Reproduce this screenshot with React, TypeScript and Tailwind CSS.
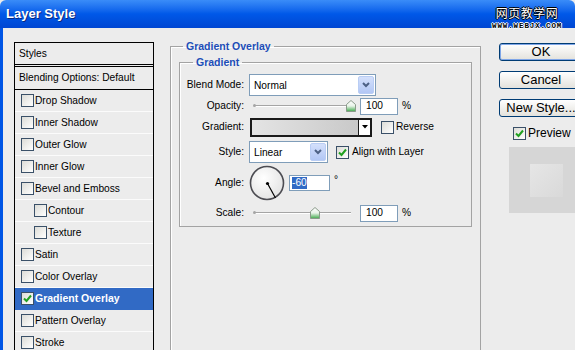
import React from "react";

const styleRows = [
  { label: "Drop Shadow" },
  { label: "Inner Shadow" },
  { label: "Outer Glow" },
  { label: "Inner Glow" },
  { label: "Bevel and Emboss" },
  { label: "Contour", indent: true },
  { label: "Texture", indent: true },
  { label: "Satin" },
  { label: "Color Overlay" },
  { label: "Gradient Overlay", checked: true, selected: true },
  { label: "Pattern Overlay" },
  { label: "Stroke" },
];

const Check = ({ checked = false }: { checked?: boolean }) => (
  <span className="w-[13px] h-[13px] shrink-0 border border-[#3a5068] bg-gradient-to-br from-[#dcdcd7] to-white flex items-center justify-center">
    {checked && (
      <svg width="9" height="9" viewBox="0 0 9 9">
        <path d="M1 4.5 L3.5 7 L8 1.5" fill="none" stroke="#21a121" strokeWidth="2" />
      </svg>
    )}
  </span>
);

const Combo = ({ value, width }: { value: string; width: string }) => (
  <div className={`${width} h-[22px] border border-[#7f9db9] bg-white flex items-center`}>
    <span className="flex-1 pl-[4px] pt-[1px]">{value}</span>
    <span className="w-[16px] h-[18px] mr-[1px] rounded-[2px] border border-[#b9cdf4] bg-gradient-to-b from-[#d4e0fb] to-[#b2c7f5] flex items-center justify-center">
      <svg width="8" height="6" viewBox="0 0 8 6">
        <path d="M1 1 L4 4 L7 1" fill="none" stroke="#4d6185" strokeWidth="2" />
      </svg>
    </span>
  </div>
);

const Thumb = () => (
  <svg width="10" height="12" viewBox="0 0 10 12">
    <defs>
      <linearGradient id="tg" x1="0" y1="0" x2="0" y2="1">
        <stop offset="0" stopColor="#ffffff" />
        <stop offset="0.5" stopColor="#e8f3e8" />
        <stop offset="1" stopColor="#3fa94a" />
      </linearGradient>
    </defs>
    <path d="M0.5 11.5 L0.5 4.5 L5 0.5 L9.5 4.5 L9.5 11.5 Z" fill="url(#tg)" stroke="#8a9a8a" />
  </svg>
);

const Slider = ({ pos }: { pos: number }) => (
  <div className="relative w-[107px] h-[14px]">
    <div className="absolute left-[5px] top-[6px] w-[97px] h-[1px] bg-[#a5a5a5] shadow-[0_1px_0_#fff]" />
    <div className="absolute left-[4px] top-[5px] w-[3px] h-[3px] rounded-full bg-[#a5a5a5]" />
    <div className="absolute top-[1px]" style={{ left: pos - 5 }}>
      <Thumb />
    </div>
  </div>
);

const NumBox = ({ value }: { value: string }) => (
  <div className="w-[38px] h-[17px] border border-[#7f9db9] bg-white pl-[5px] flex items-center">{value}</div>
);

const Button = ({ label, primary = false }: { label: string; primary?: boolean }) => (
  <div
    className={`h-[18px] rounded-[3px] border border-[#003c74] bg-gradient-to-b from-white to-[#e3e2dc] flex items-center justify-center text-[13px] ${
      primary ? "shadow-[inset_0_0_0_1px_#7fa6e8]" : ""
    }`}
  >
    {label}
  </div>
);

export default function App() {
  return (
    <div className="relative w-[575px] h-[350px] overflow-hidden bg-[#ececec] text-black font-['Liberation_Sans',Arial,sans-serif] text-[10.2px] flex flex-col">
      {/* title bar */}
      <div className="h-[28px] shrink-0 rounded-t-[6px] bg-gradient-to-b from-[#3a8cf8] via-[#0058e8] to-[#0046d2] flex items-center pl-[6px]">
        <span className="text-white font-bold text-[13px] [text-shadow:1px_1px_0_#0a2a80]">Layer Style</span>
      </div>

      {/* watermark */}
      <div className="absolute left-[492px] top-[7px] flex flex-col items-center leading-none">
        <span className="text-white text-[12px] font-['Noto_Sans_CJK_SC',sans-serif] tracking-[0.5px] [text-shadow:1px_0_0_#000,-1px_0_0_#000,0_1px_0_#000,0_-1px_0_#000]">
          网页教学网
        </span>
        <span className="mt-[4px] text-black text-[7.5px] font-bold font-['Liberation_Mono',monospace] tracking-[0.9px] [text-shadow:1px_0_0_#fff,-1px_0_0_#fff,0_1px_0_#fff,0_-1px_0_#fff]">
          WWW.WEBJX.COM
        </span>
      </div>

      <div className="flex-1 flex border-l-[3px] border-[#0055e5] min-h-0">
        {/* styles list */}
        <div className="ml-[11px] mt-[14px] w-[140px] h-[320px] shrink-0 border border-black">
          <div className="h-[22px] border-b border-black pl-[4px] flex items-center">Styles</div>
          <div className="h-[24px] mt-[1px] border-y border-black pl-[4px] flex items-center">
            Blending Options: Default
          </div>
          {styleRows.map((row) => (
            <div
              key={row.label}
              className={`h-[22px] flex items-center border-b ${
                row.selected ? "bg-[#316ac5] text-white font-bold text-[10.5px] border-[#316ac5]" : "border-[#fbfbfb]"
              } ${row.indent ? "pl-[19px]" : "pl-[6px]"}`}
            >
              <Check checked={row.checked} />
              <span className="ml-[1px]">{row.label}</span>
            </div>
          ))}
        </div>

        {/* main panel */}
        <fieldset className="ml-[16px] mt-[12px] w-[311px] h-[330px] shrink-0 border border-[#a3a3a3] shadow-[inset_1px_1px_0_#fff]">
          <legend className="ml-[12px] px-[3px] leading-[13px] font-bold text-[10.5px] text-[#1c4eb8]">Gradient Overlay</legend>
          <fieldset className="mx-[8px] mt-[3px] border border-[#a3a3a3] shadow-[inset_1px_1px_0_#fff] pb-[3px]">
            <legend className="ml-[13px] px-[3px] leading-[13px] font-bold text-[10.5px] text-[#1c4eb8]">Gradient</legend>

            <div className="mt-[5px] h-[22px] flex items-center">
              <span className="w-[64px] text-right">Blend Mode:</span>
              <div className="ml-[5px]">
                <Combo value="Normal" width="w-[127px]" />
              </div>
            </div>

            <div className="h-[20px] flex items-center">
              <span className="w-[64px] text-right">Opacity:</span>
              <div className="ml-[5px] flex items-center">
                <Slider pos={102} />
                <div className="ml-[4px]">
                  <NumBox value="100" />
                </div>
                <span className="ml-[4px]">%</span>
              </div>
            </div>

            <div className="mt-[1px] h-[20px] flex items-center">
              <span className="w-[64px] text-right">Gradient:</span>
              <div className="ml-[6px] w-[122px] h-[19px] border-2 border-[#1a1a1a] flex">
                <div className="flex-1 bg-gradient-to-r from-[#e4e4e4] to-[#c9c9c9]" />
                <div className="w-[12px] bg-white border-l border-[#1a1a1a] flex items-center justify-center">
                  <svg width="6" height="4" viewBox="0 0 6 4">
                    <path d="M0 0 L6 0 L3 3.5 Z" fill="#000" />
                  </svg>
                </div>
              </div>
              <div className="ml-[9px]">
                <Check />
              </div>
              <span className="ml-[2px]">Reverse</span>
            </div>

            <div className="mt-[4px] h-[22px] flex items-center">
              <span className="w-[64px] text-right">Style:</span>
              <div className="ml-[5px]">
                <Combo value="Linear" width="w-[79px]" />
              </div>
              <div className="ml-[8px]">
                <Check checked />
              </div>
              <span className="ml-[3px]">Align with Layer</span>
            </div>

            <div className="mt-[2px] h-[36px] flex items-center">
              <span className="w-[64px] text-right">Angle:</span>
              <svg className="ml-[5px]" width="36" height="36" viewBox="0 0 36 36">
                <defs>
                  <radialGradient id="dial" cx="0.4" cy="0.35" r="0.7">
                    <stop offset="0" stopColor="#ffffff" />
                    <stop offset="1" stopColor="#e2e2e2" />
                  </radialGradient>
                </defs>
                <circle cx="18" cy="18" r="16.5" fill="url(#dial)" stroke="#4c4c52" strokeWidth="1.6" />
                <line x1="18.5" y1="18.5" x2="26.5" y2="33" stroke="#000" strokeWidth="1.2" />
                <circle cx="18.5" cy="18.5" r="1.6" fill="#000" />
              </svg>
              <div className="ml-[4px] w-[41px] h-[16px] border border-[#7f9db9] bg-white flex items-center pl-[2px]">
                <span className="bg-[#316ac5] text-white leading-[12px]">-60</span>
              </div>
              <span className="ml-[4px] self-start mt-[10px] leading-none">°</span>
            </div>

            <div className="mt-[2px] h-[20px] flex items-center">
              <span className="w-[64px] text-right">Scale:</span>
              <div className="ml-[5px] flex items-center">
                <Slider pos={66} />
                <div className="ml-[4px]">
                  <NumBox value="100" />
                </div>
                <span className="ml-[4px]">%</span>
              </div>
            </div>
          </fieldset>
        </fieldset>

        {/* buttons */}
        <div className="ml-[18px] mt-[15px] w-[84px] shrink-0 flex flex-col">
          <Button label="OK" primary />
          <div className="mt-[10px]">
            <Button label="Cancel" />
          </div>
          <div className="mt-[10px]">
            <Button label="New Style..." />
          </div>
          <div className="mt-[7px] ml-[14px] flex items-center text-[12px]">
            <Check checked />
            <span className="ml-[2px]">Preview</span>
          </div>
          <div className="mt-[5px] ml-[10px] h-[66px] bg-[#d6d6d6] flex items-center justify-center">
            <div className="w-[33px] h-[33px] bg-gradient-to-br from-[#e6e6e6] to-[#d9d9d9]" />
          </div>
        </div>
      </div>
    </div>
  );
}
